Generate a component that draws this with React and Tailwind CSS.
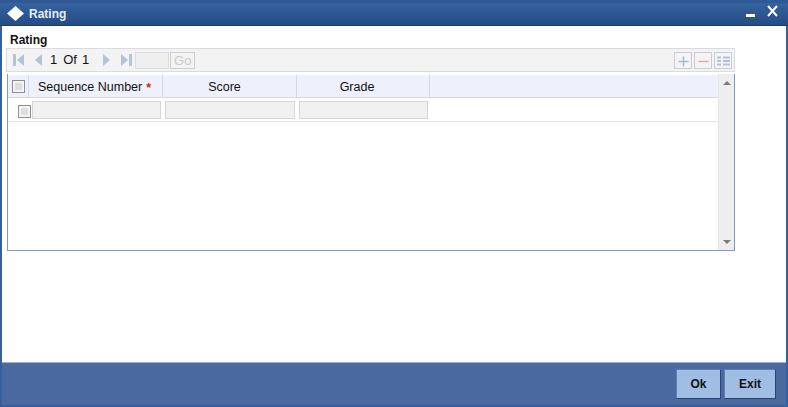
import { Plus, Minus } from 'lucide-react';

function Check({ className = '' }) {
    return (
        <div className={`size-[13px] bg-[#dedede] border border-[#8f8f8f] shadow-[inset_0_0_0_2px_#f4f4f4] ${className}`} />
    );
}

function NavTri({ dir = 'left', bar = false, className = '' }) {
    const w = bar ? 11 : 7;
    return (
        <svg className={className} width={w} height="12" viewBox={`0 0 ${w} 12`} aria-hidden="true">
            {dir === 'left' ? (
                <>
                    {bar && <rect x="0" y="0" width="3" height="12" fill="#b4c3d6" />}
                    <path d={`M${w} 0 V12 L${w - 7} 6 Z`} fill="#b4c3d6" />
                </>
            ) : (
                <>
                    {bar && <rect x="8" y="0" width="3" height="12" fill="#b4c3d6" />}
                    <path d="M0 0 V12 L7 6 Z" fill="#b4c3d6" />
                </>
            )}
        </svg>
    );
}

function ToolBtn({ children }) {
    return (
        <div className="w-[18px] h-[17px] border border-[#c9ced6] bg-[#f4f4f4] flex items-center justify-center pt-[2px]">
            {children}
        </div>
    );
}

function Field({ className = '' }) {
    return <div className={`h-[18px] bg-[#f1f1f1] border border-[#d6d6d6] ${className}`} />;
}

export default function App() {
    return (
        <div className="w-[788px] h-[407px] flex flex-col bg-[#35609b] px-[2px] pb-[2px] font-['Liberation_Sans',Arial,sans-serif] text-[#111] text-[12px] overflow-hidden">
            {/* title bar */}
            <div className="h-[26px] -mx-[2px] flex items-center bg-gradient-to-b from-[#36629f] to-[#244c85] border-t-[3px] border-t-[#2f5994] border-b border-b-[#1b3a68] pl-[7px] pr-[9px]">
                <svg className="-mt-[2px]" width="17" height="15" viewBox="0 0 17 15" aria-hidden="true">
                    <path d="M8.5 0 L17 7.5 L8.5 15 L0 7.5 Z" fill="#ffffff" />
                </svg>
                <span className="ml-[5px] text-[12px] font-bold text-[#e6edf7]">Rating</span>
                <div className="ml-auto flex items-start gap-[11px] -mt-[5px]">
                    <div className="mt-[9px] w-[9px] h-[3px] bg-white" />
                    <svg width="13" height="13" viewBox="0 0 13 13" aria-hidden="true">
                        <path d="M2 1 L11 11 M11 1 L2 11" stroke="#ffffff" strokeWidth="2" />
                    </svg>
                </div>
            </div>

            {/* body */}
            <div className="flex-1 bg-white flex flex-col pl-[4px] pr-[51px]">
                <div className="pl-[4px] pt-[7px] h-[22px] font-bold leading-[14px]">Rating</div>

                <div className="h-[24px] w-[729px] flex items-center bg-[#f3f3f3] border border-[#d8dbe1] pl-[6px] pr-[2px]">
                    <NavTri bar />
                    <NavTri className="ml-[11px]" />
                    <span className="ml-[8px] text-[13px]">1</span>
                    <span className="ml-[6px] text-[13px]">Of</span>
                    <span className="ml-[5px] text-[13px]">1</span>
                    <NavTri dir="right" className="ml-[14px]" />
                    <NavTri dir="right" bar className="ml-[11px]" />
                    <div className="ml-[3px] w-[34px] h-[17px] bg-[#efefef] border border-[#dcdcdc]" />
                    <div className="ml-[1px] w-[25px] h-[17px] border border-[#cfcfcf] text-[#c8c8c8] text-[13px] flex items-center justify-center leading-none">Go</div>
                    <div className="ml-auto flex gap-[2px]">
                        <ToolBtn><Plus size={15} strokeWidth={2.6} color="#a9bad6" /></ToolBtn>
                        <ToolBtn><Minus size={15} strokeWidth={2.6} color="#eba6a6" /></ToolBtn>
                        <ToolBtn>
                            <svg width="13" height="10" viewBox="0 0 13 10" aria-hidden="true">
                                <path d="M0 1.5 H4 M6 1.5 H13 M0 5 H4 M6 5 H13 M0 8.5 H4 M6 8.5 H13" stroke="#b3c1d8" strokeWidth="2" />
                            </svg>
                        </ToolBtn>
                    </div>
                </div>

                {/* grid */}
                <div className="mt-[2px] ml-[1px] w-[728px] h-[177px] flex border-l border-r border-b border-[#7d9bbd]">
                    <div className="flex-1 flex flex-col min-w-0">
                        <div className="h-[23px] flex mt-[1px] text-[12.5px] border-b border-[#d3d8e4]">
                            <div className="w-[21px] flex items-center justify-center bg-[#eef1fb] border-r border-[#d3d8e4]">
                                <Check />
                            </div>
                            <div className="w-[134px] pl-[9px] pt-[2px] flex items-center bg-[#eef1fb] border-r border-[#d3d8e4]">
                                Sequence Number
                                <span className="ml-[4px] mt-[2px] text-[#d22] font-bold">*</span>
                            </div>
                            <div className="w-[134px] pr-[10px] pt-[2px] flex items-center justify-center bg-[#eef1fb] border-r border-[#d3d8e4]">Score</div>
                            <div className="w-[133px] pr-[12px] pt-[2px] flex items-center justify-center bg-[#eef1fb] border-r border-[#d3d8e4]">Grade</div>
                            <div className="flex-1 bg-[#eef1fb]" />
                        </div>
                        <div className="h-[24px] flex items-center border-b border-[#e2e4e8]">
                            <div className="w-[24px] flex justify-end pr-[1px]">
                                <Check className="mt-[3px]" />
                            </div>
                            <Field className="w-[129px]" />
                            <Field className="w-[130px] ml-[4px]" />
                            <Field className="w-[129px] ml-[4px]" />
                        </div>
                    </div>
                    <div className="w-[16px] bg-[#eeeeee] flex flex-col items-center justify-between pt-[7px] pb-[6px] border-l border-l-[#e6e6e6]">
                        <svg width="8" height="4" viewBox="0 0 8 4" aria-hidden="true"><path d="M0 4 L4 0 L8 4 Z" fill="#7c7c7c" /></svg>
                        <svg width="8" height="4" viewBox="0 0 8 4" aria-hidden="true"><path d="M0 0 L8 0 L4 4 Z" fill="#7c7c7c" /></svg>
                    </div>
                </div>
            </div>

            {/* footer */}
            <div className="h-[43px] bg-[#4a699f] border-t border-t-[#9fb2d0] flex items-start justify-end gap-[3px] pt-[6px] pr-[10px]">
                <button className="w-[45px] h-[30px] bg-[#a0bde3] border border-[#5f7fae] border-r-[#2d456e] border-b-[#2d456e] font-bold text-[12px] text-[#111]">Ok</button>
                <button className="w-[52px] h-[30px] bg-[#a0bde3] border border-[#5f7fae] border-r-[#2d456e] border-b-[#2d456e] font-bold text-[12px] text-[#111]">Exit</button>
            </div>
        </div>
    );
}
